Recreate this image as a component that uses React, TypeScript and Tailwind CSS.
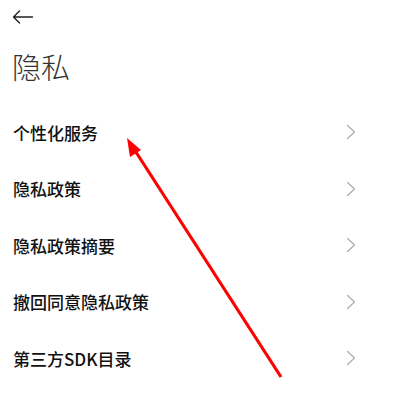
const items = ["个性化服务", "隐私政策", "隐私政策摘要", "撤回同意隐私政策", "第三方SDK目录"];

function Chevron() {
  return (
    <svg width="10" height="16" viewBox="0 0 10 16" fill="none" stroke="#ababab" strokeWidth="1.2" strokeLinecap="round" strokeLinejoin="round">
      <path d="M1.5 1.5L8.5 8l-7 6.5" />
    </svg>
  );
}

export default function App() {
  return (
    <div
      className="relative w-[395px] h-[402px] bg-white overflow-hidden"
      style={{ fontFamily: '"Noto Sans CJK SC", "Noto Sans", sans-serif' }}
    >
      <div className="h-[34px] flex items-center pl-[12px]">
        <svg width="22" height="14" viewBox="0 0 22 14" fill="none" stroke="#222" strokeWidth="1.4" strokeLinecap="round" strokeLinejoin="round">
          <path d="M20.5 7H1.5M7.5 1L1.5 7l6 6" />
        </svg>
      </div>

      <div className="h-[64px] flex items-center pl-[12px]">
        <h1 className="text-[29px] font-light text-[#333] leading-none">隐私</h1>
      </div>

      <ul className="pt-[6px]">
        {items.map((item) => (
          <li key={item} className="h-[56.5px] flex items-center justify-between pl-[13px] pr-[39px]">
            <span className="text-[17px] font-medium text-[#111] leading-none">{item}</span>
            <Chevron />
          </li>
        ))}
      </ul>

      {/* red annotation arrow */}
      <svg className="absolute inset-0 pointer-events-none" width="395" height="402" viewBox="0 0 395 402">
        <line x1="281" y1="377" x2="134" y2="149" stroke="#ff0000" strokeWidth="3.2" />
        <polygon points="127,138 141,150 130,157" fill="#ff0000" />
      </svg>
    </div>
  );
}
